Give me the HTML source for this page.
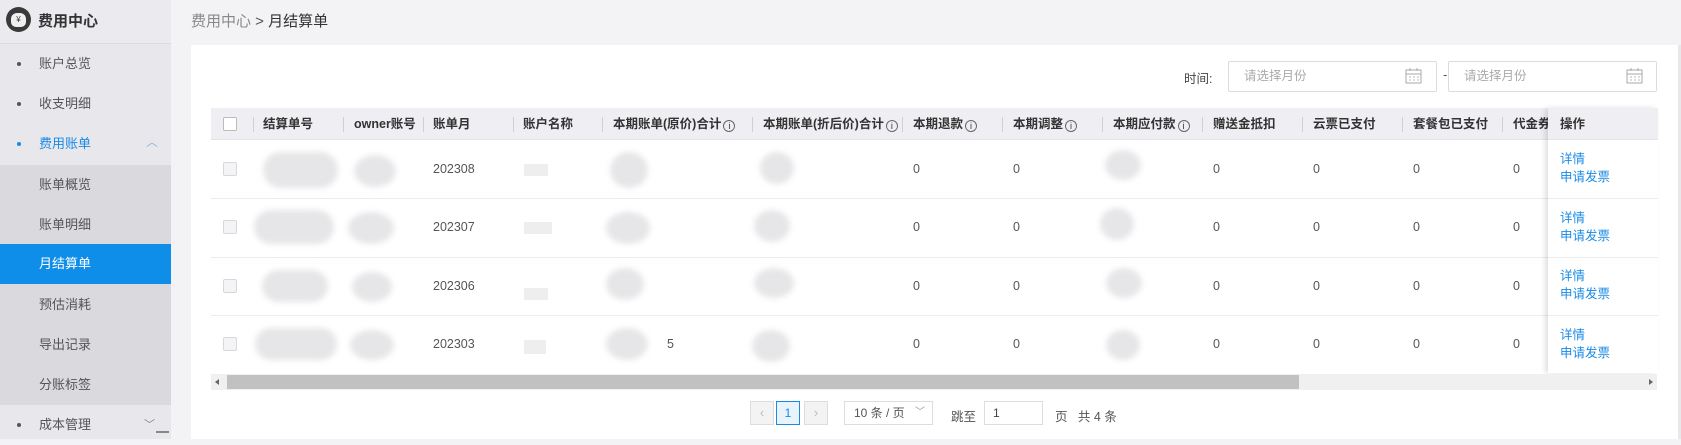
<!DOCTYPE html>
<html><head><meta charset="utf-8"><style>
*{margin:0;padding:0;box-sizing:border-box}
body{width:1681px;height:439px;overflow:hidden;background:#f3f3f5;font-family:"Liberation Sans","Noto Sans CJK SC",sans-serif;font-size:13px;color:#333;position:relative}
.abs{position:absolute}
.side{left:0;top:0;width:171px;height:439px;background:#e8e8ec}
.sh{left:0;top:0;width:171px;height:44px;background:#ebebef;border-bottom:1px solid #dcdce0}
.mi{left:0;width:171px;height:40px;line-height:40px;color:#555;font-size:13px}
.mi .t{position:absolute;left:39px}
.mi .d{position:absolute;left:17px;top:18px;width:4px;height:4px;border-radius:50%;background:#555}
.sub{left:0;top:165px;width:171px;height:240px;background:#d9d9de}
.si{left:0;width:171px;height:40px;line-height:40px;color:#555;padding-left:39px}
.card{left:191px;top:45px;width:1487px;height:394px;background:#fff}
.th{top:108px;left:211px;width:1446px;height:32px;background:#efeff3;border-bottom:1px solid #e4e4e8}
.hc{top:108px;height:32px;line-height:32px;font-weight:bold;font-size:12.5px;color:#333;white-space:nowrap}
.sep{top:117px;width:1px;height:15px;background:#d0d0d4}
.rl{left:211px;width:1446px;height:1px;background:#ececee}
.c{font-size:12.5px;color:#555}
.cb{width:14px;height:14px;border:1px solid #d8d8dc;border-radius:2px;background:#f4f4f6}
.blob{background:#e6e6e8;border-radius:50%;filter:blur(3px)}
.op{left:1548px;top:108px;width:110px;height:265px;background:#fff;box-shadow:-3px 0 5px rgba(0,0,0,.12)}
.lk{color:#1a8ae6;font-size:12.5px}
.info{display:inline-block;width:12px;height:12px;border:1px solid #666;border-radius:50%;font-size:9px;line-height:10px;text-align:center;font-weight:normal;vertical-align:-1px;margin-left:2px}
.inp{height:31px;border:1px solid #dcdcdf;border-radius:2px;color:#aaa;font-size:12.5px;line-height:29px;padding-left:15px}
</style></head><body>
<div class="abs side"></div>
<div class="abs sh"></div>
<div class="abs" style="left:6px;top:7px;width:25px;height:25px;border-radius:50%;background:#3a3a3a"></div>
<div class="abs" style="left:11px;top:13px;width:15px;height:14px;border-radius:6px 6px 5px 5px;background:#f0f0f0;font-size:8px;text-align:center;line-height:14px;color:#333">¥</div>
<div class="abs" style="left:38px;top:10px;font-size:15px;font-weight:bold;color:#333">费用中心</div>
<div class="abs mi" style="top:44px"><span class="d"></span><span class="t">账户总览</span></div>
<div class="abs mi" style="top:84px"><span class="d"></span><span class="t">收支明细</span></div>
<div class="abs mi" style="top:124px;color:#1a8ae6"><span class="d" style="background:#1a8ae6"></span><span class="t">费用账单</span><span style="position:absolute;left:146px;top:-2px;color:#8ab8e8;font-size:12px">︿</span></div>
<div class="abs sub"></div>
<div class="abs si" style="top:165px">账单概览</div>
<div class="abs si" style="top:205px">账单明细</div>
<div class="abs si" style="top:244px;background:#0f8ee9;color:#fff">月结算单</div>
<div class="abs si" style="top:285px">预估消耗</div>
<div class="abs si" style="top:325px">导出记录</div>
<div class="abs si" style="top:365px">分账标签</div>
<div class="abs mi" style="top:405px"><span class="d"></span><span class="t">成本管理</span><span style="position:absolute;left:144px;top:0;color:#888;font-size:11px">﹀</span></div>
<div class="abs" style="left:156px;top:431px;width:13px;height:2px;background:#888"></div>

<div class="abs" style="left:191px;top:10px;font-size:15px;color:#888">费用中心 <span style="color:#555">&gt; </span><span style="color:#333">月结算单</span></div>
<div class="abs card"></div>
<div class="abs" style="left:1678px;top:45px;width:3px;height:394px;background:#e8e8ea"></div>

<div class="abs" style="left:1184px;top:68px;font-size:12.5px;color:#444">时间:</div>
<div class="abs inp" style="left:1228px;top:61px;width:209px">请选择月份</div>
<div class="abs" style="left:1443px;top:67px;color:#555">-</div>
<div class="abs inp" style="left:1448px;top:61px;width:209px">请选择月份</div>
<svg class="abs" style="left:1405px;top:68px" width="17" height="16"><rect x="1" y="2" width="15" height="13" fill="none" stroke="#aaa"/><line x1="1" y1="6" x2="16" y2="6" stroke="#aaa"/><line x1="5" y1="0" x2="5" y2="3" stroke="#aaa"/><line x1="12" y1="0" x2="12" y2="3" stroke="#aaa"/><path d="M4 9h2M8 9h2M12 9h2M4 12h2M8 12h2M12 12h2" stroke="#bbb"/></svg>
<svg class="abs" style="left:1626px;top:68px" width="17" height="16"><rect x="1" y="2" width="15" height="13" fill="none" stroke="#aaa"/><line x1="1" y1="6" x2="16" y2="6" stroke="#aaa"/><line x1="5" y1="0" x2="5" y2="3" stroke="#aaa"/><line x1="12" y1="0" x2="12" y2="3" stroke="#aaa"/><path d="M4 9h2M8 9h2M12 9h2M4 12h2M8 12h2M12 12h2" stroke="#bbb"/></svg>

<div class="abs th"></div>
<div class="abs cb" style="left:223px;top:117px;background:#fff;border-color:#bbb"></div>
<div class="abs sep" style="left:253px"></div><div class="abs hc" style="left:263px">结算单号</div>
<div class="abs sep" style="left:343px"></div><div class="abs hc" style="left:354px">owner账号</div>
<div class="abs sep" style="left:423px"></div><div class="abs hc" style="left:433px">账单月</div>
<div class="abs sep" style="left:513px"></div><div class="abs hc" style="left:523px">账户名称</div>
<div class="abs sep" style="left:602px"></div><div class="abs hc" style="left:613px">本期账单(原价)合计<span class="info">i</span></div>
<div class="abs sep" style="left:752px"></div><div class="abs hc" style="left:763px">本期账单(折后价)合计<span class="info">i</span></div>
<div class="abs sep" style="left:902px"></div><div class="abs hc" style="left:913px">本期退款<span class="info">i</span></div>
<div class="abs sep" style="left:1002px"></div><div class="abs hc" style="left:1013px">本期调整<span class="info">i</span></div>
<div class="abs sep" style="left:1102px"></div><div class="abs hc" style="left:1113px">本期应付款<span class="info">i</span></div>
<div class="abs sep" style="left:1202px"></div><div class="abs hc" style="left:1213px">赠送金抵扣</div>
<div class="abs sep" style="left:1302px"></div><div class="abs hc" style="left:1313px">云票已支付</div>
<div class="abs sep" style="left:1402px"></div><div class="abs hc" style="left:1413px">套餐包已支付</div>
<div class="abs sep" style="left:1502px"></div><div class="abs hc" style="left:1513px">代金券</div>

<div class="abs rl" style="top:198px"></div>
<div class="abs rl" style="top:257px"></div>
<div class="abs rl" style="top:315px"></div>

<div class="abs cb" style="left:223px;top:162px"></div>
<div class="abs cb" style="left:223px;top:220px"></div>
<div class="abs cb" style="left:223px;top:279px"></div>
<div class="abs cb" style="left:223px;top:337px"></div>

<div class="abs blob" style="left:263px;top:152px;width:75px;height:36px;border-radius:18px"></div>
<div class="abs blob" style="left:354px;top:155px;width:42px;height:32px"></div>
<div class="abs blob" style="left:254px;top:210px;width:80px;height:34px;border-radius:17px"></div>
<div class="abs blob" style="left:348px;top:212px;width:46px;height:32px"></div>
<div class="abs blob" style="left:262px;top:270px;width:66px;height:32px;border-radius:16px"></div>
<div class="abs blob" style="left:352px;top:272px;width:40px;height:30px"></div>
<div class="abs blob" style="left:255px;top:328px;width:82px;height:32px;border-radius:16px"></div>
<div class="abs blob" style="left:350px;top:330px;width:44px;height:30px"></div>

<div class="abs c" style="left:433px;top:162px">202308</div>
<div class="abs c" style="left:433px;top:220px">202307</div>
<div class="abs c" style="left:433px;top:279px">202306</div>
<div class="abs c" style="left:433px;top:337px">202303</div>

<div class="abs" style="left:524px;top:164px;width:24px;height:12px;background:#eee"></div>
<div class="abs" style="left:524px;top:222px;width:28px;height:12px;background:#eee"></div>
<div class="abs" style="left:524px;top:288px;width:24px;height:12px;background:#eee"></div>
<div class="abs" style="left:524px;top:340px;width:22px;height:14px;background:#eee"></div>

<div class="abs blob" style="left:610px;top:152px;width:38px;height:36px"></div>
<div class="abs blob" style="left:606px;top:212px;width:44px;height:32px"></div>
<div class="abs blob" style="left:606px;top:268px;width:38px;height:32px"></div>
<div class="abs blob" style="left:606px;top:328px;width:42px;height:32px"></div>
<div class="abs c" style="left:667px;top:337px">5</div>

<div class="abs blob" style="left:760px;top:152px;width:34px;height:32px"></div>
<div class="abs blob" style="left:754px;top:210px;width:36px;height:32px"></div>
<div class="abs blob" style="left:754px;top:268px;width:40px;height:30px"></div>
<div class="abs blob" style="left:752px;top:330px;width:38px;height:32px"></div>

<div class="abs blob" style="left:1105px;top:150px;width:36px;height:30px"></div>
<div class="abs blob" style="left:1100px;top:208px;width:34px;height:32px"></div>
<div class="abs blob" style="left:1106px;top:268px;width:36px;height:30px"></div>
<div class="abs blob" style="left:1106px;top:330px;width:34px;height:30px"></div>

<div class="abs c" style="left:913px;top:162px">0</div><div class="abs c" style="left:1013px;top:162px">0</div><div class="abs c" style="left:1213px;top:162px">0</div><div class="abs c" style="left:1313px;top:162px">0</div><div class="abs c" style="left:1413px;top:162px">0</div><div class="abs c" style="left:1513px;top:162px">0</div>
<div class="abs c" style="left:913px;top:220px">0</div><div class="abs c" style="left:1013px;top:220px">0</div><div class="abs c" style="left:1213px;top:220px">0</div><div class="abs c" style="left:1313px;top:220px">0</div><div class="abs c" style="left:1413px;top:220px">0</div><div class="abs c" style="left:1513px;top:220px">0</div>
<div class="abs c" style="left:913px;top:279px">0</div><div class="abs c" style="left:1013px;top:279px">0</div><div class="abs c" style="left:1213px;top:279px">0</div><div class="abs c" style="left:1313px;top:279px">0</div><div class="abs c" style="left:1413px;top:279px">0</div><div class="abs c" style="left:1513px;top:279px">0</div>
<div class="abs c" style="left:913px;top:337px">0</div><div class="abs c" style="left:1013px;top:337px">0</div><div class="abs c" style="left:1213px;top:337px">0</div><div class="abs c" style="left:1313px;top:337px">0</div><div class="abs c" style="left:1413px;top:337px">0</div><div class="abs c" style="left:1513px;top:337px">0</div>

<div class="abs op"></div>
<div class="abs" style="left:1548px;top:108px;width:110px;height:32px;background:#efeff3;border-bottom:1px solid #e4e4e8"></div>
<div class="abs hc" style="left:1560px">操作</div>
<div class="abs" style="left:1548px;top:198px;width:110px;height:1px;background:#ececee"></div>
<div class="abs" style="left:1548px;top:257px;width:110px;height:1px;background:#ececee"></div>
<div class="abs" style="left:1548px;top:315px;width:110px;height:1px;background:#ececee"></div>
<div class="abs lk" style="left:1560px;top:150px;line-height:18px">详情<br>申请发票</div>
<div class="abs lk" style="left:1560px;top:209px;line-height:18px">详情<br>申请发票</div>
<div class="abs lk" style="left:1560px;top:267px;line-height:18px">详情<br>申请发票</div>
<div class="abs lk" style="left:1560px;top:326px;line-height:18px">详情<br>申请发票</div>

<div class="abs" style="left:211px;top:374px;width:1446px;height:16px;background:#f0f0f0"></div>
<div class="abs" style="left:227px;top:375px;width:1072px;height:14px;background:#c1c1c1"></div>
<div class="abs" style="left:215px;top:379px;width:0;height:0;border-top:3px solid transparent;border-bottom:3px solid transparent;border-right:4px solid #666"></div>
<div class="abs" style="left:1649px;top:379px;width:0;height:0;border-top:3px solid transparent;border-bottom:3px solid transparent;border-left:4px solid #666"></div>

<div class="abs" style="left:750px;top:401px;width:24px;height:24px;border:1px solid #ddd;background:#f3f3f3;color:#bbb;text-align:center;line-height:22px">&lsaquo;</div>
<div class="abs" style="left:776px;top:401px;width:24px;height:24px;border:1px solid #1a8ae6;background:#e8f3fc;color:#1a8ae6;text-align:center;line-height:22px;font-size:12px">1</div>
<div class="abs" style="left:804px;top:401px;width:24px;height:24px;border:1px solid #ddd;background:#f3f3f3;color:#bbb;text-align:center;line-height:22px">&rsaquo;</div>
<div class="abs" style="left:844px;top:401px;width:89px;height:24px;border:1px solid #ddd;color:#555;font-size:12px;line-height:22px;padding-left:9px">10 条 / 页<span style="position:absolute;right:7px;color:#999;font-size:10px">﹀</span></div>
<div class="abs" style="left:951px;top:406px;font-size:12.5px;color:#555">跳至</div>
<div class="abs" style="left:984px;top:401px;width:59px;height:24px;border:1px solid #ddd;font-size:12px;line-height:22px;padding-left:8px;color:#444">1</div>
<div class="abs" style="left:1055px;top:406px;font-size:12.5px;color:#555">页&nbsp;&nbsp;&nbsp;共 4 条</div>
</body></html>
